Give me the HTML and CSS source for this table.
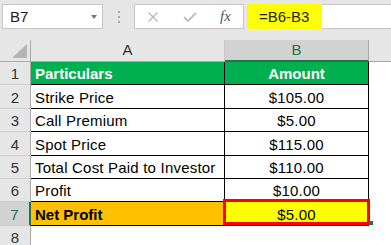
FILE: index.html
```html
<!DOCTYPE html>
<html>
<head>
<meta charset="utf-8">
<link rel="stylesheet" href="styles.css">
</head>
<body>
<div class="app">
  <div class="toolbar">
    <div class="namebox"><span class="nb-text">B7</span><span class="caret"></span></div>
    <div class="sep"><i></i><i></i><i></i></div>
    <div class="fxbox">
      <svg class="ico-x" width="10" height="10" viewBox="0 0 10 10"><path d="M0.5 0.5L9.5 9.5M9.5 0.5L0.5 9.5" stroke="#b8b8b8" stroke-width="1.4" fill="none"/></svg>
      <svg class="ico-check" width="14" height="10" viewBox="0 0 14 10"><path d="M1 5L5 9L13 1" stroke="#c2c2c2" stroke-width="2" fill="none"/></svg>
      <span class="fx">fx</span>
    </div>
    <div class="formula"><span class="hl">=B6-B3</span><span class="rest"></span></div>
  </div>
  <div class="sheet">
    <div class="corner"><svg width="15" height="14" viewBox="0 0 15 14"><polygon points="15,0 15,14 0,14" fill="#b4b4b4"/></svg></div>
    <div class="colhead">A</div>
    <div class="colhead sel">B</div>
    <div class="colhead blank"></div>

    <div class="rh">1</div>
    <div class="c head">Particulars</div>
    <div class="c head num">Amount</div>
    <div class="e"></div>

    <div class="rh">2</div>
    <div class="c">Strike Price</div>
    <div class="c num">$105.00</div>
    <div class="e"></div>

    <div class="rh">3</div>
    <div class="c">Call Premium</div>
    <div class="c num">$5.00</div>
    <div class="e"></div>

    <div class="rh">4</div>
    <div class="c">Spot Price</div>
    <div class="c num">$115.00</div>
    <div class="e"></div>

    <div class="rh">5</div>
    <div class="c">Total Cost Paid to Investor</div>
    <div class="c num">$110.00</div>
    <div class="e"></div>

    <div class="rh">6</div>
    <div class="c">Profit</div>
    <div class="c num">$10.00</div>
    <div class="e"></div>

    <div class="rh sel">7</div>
    <div class="c net">Net Profit</div>
    <div class="c num b7">$5.00<span class="sel-box"></span><span class="handle"></span></div>
    <div class="e"></div>

    <div class="rh">8</div>
    <div class="e"></div>
    <div class="e"></div>
    <div class="e"></div>
  </div>
</div>
</body>
</html>
```
FILE: styles.css
```css
* { box-sizing: border-box; }
body { margin: 0; }
.app {
  width: 391px;
  height: 245px;
  overflow: hidden;
  background: #e6e6e6;
  font-family: "Liberation Sans", Arial, sans-serif;
  font-size: 15px;
  color: #000;
}
.toolbar {
  display: flex;
  height: 29px;
  padding-top: 4px;
}
.namebox {
  width: 101px;
  margin-left: 2px;
  background: #fff;
  border: 1px solid #c6c6c6;
  display: flex;
  align-items: center;
  justify-content: space-between;
  padding: 0 5px 0 7px;
  line-height: 17px;
  color: #222;
}
.caret {
  width: 0;
  height: 0;
  border-left: 3px solid transparent;
  border-right: 3px solid transparent;
  border-top: 4px solid #777;
}
.sep {
  width: 31px;
  display: flex;
  flex-direction: column;
  align-items: center;
  justify-content: center;
  gap: 3px;
}
.sep i {
  display: block;
  width: 2px;
  height: 2px;
  background: #a6a6a6;
}
.fxbox {
  width: 110px;
  background: #fff;
  border: 1px solid #c6c6c6;
  display: flex;
  align-items: center;
  padding-left: 13px;
}
.ico-check { margin-left: 25px; }
.fx {
  margin-left: 23px;
  font-family: "Liberation Serif", serif;
  font-style: italic;
  font-size: 15px;
  color: #555;
  line-height: 17px;
}
.formula {
  flex: 1;
  margin-left: 3px;
  display: flex;
}
.hl {
  width: 75px;
  background: #ffff00;
  padding-left: 12px;
  display: flex;
  align-items: center;
  line-height: 17px;
  color: #222;
}
.rest {
  flex: 1;
  background: #fff;
  border-top: 1px solid #c6c6c6;
  border-bottom: 1px solid #c6c6c6;
}
.sheet {
  margin-top: 11px;
  display: grid;
  grid-template-columns: 31px 194px 144px 1fr;
  grid-template-rows: 22px 23px 24px 23px 24px 23px 23px 24px 23px;
  background: #fff;
}
.corner {
  background: #e6e6e6;
  border-right: 1px solid #a9a9a9;
  border-bottom: 1px solid #a9a9a9;
  display: flex;
  justify-content: flex-end;
  align-items: flex-end;
  padding: 0 3px 3px 0;
}
.colhead {
  background: #e6e6e6;
  border-bottom: 1px solid #a9a9a9;
  border-right: 1px solid #c8c8c8;
  display: flex;
  justify-content: center;
  align-items: flex-end;
  padding-bottom: 3px;
  line-height: 17px;
  color: #333;
}
.colhead.sel {
  background: #d2d2d2;
  color: #217346;
  border-bottom: 2px solid #217346;
  border-right: 1px solid #a9a9a9;
  padding-bottom: 2px;
}
.colhead.blank { border-right: none; }
.rh {
  background: #e6e6e6;
  border-right: 1px solid #a9a9a9;
  border-bottom: 1px solid #cfcfcf;
  display: flex;
  justify-content: center;
  align-items: flex-end;
  padding-bottom: 2px;
  line-height: 17px;
  color: #333;
}
.rh.sel {
  background: #d2d2d2;
  color: #217346;
  border-right: 2px solid #217346;
}
.c {
  border-right: 1px solid #000;
  border-bottom: 1px solid #000;
  display: flex;
  align-items: flex-end;
  padding: 0 4px 2px;
  line-height: 17px;
  white-space: nowrap;
  letter-spacing: 0.2px;
}
.c.num { justify-content: center; }
.c.head {
  background: #00b050;
  color: #fff;
  font-weight: bold;
  letter-spacing: 0;
}
.c.net {
  background: #ffc000;
  font-weight: bold;
  letter-spacing: 0;
}
.c.b7 {
  background: #ffff00;
  position: relative;
}
.sel-box {
  position: absolute;
  top: -3px;
  left: -2px;
  right: -2px;
  bottom: 0;
  border: 3px solid #ff0000;
}
.handle {
  position: absolute;
  right: -5px;
  bottom: 0;
  width: 4px;
  height: 4px;
  background: #217346;
}
.e { background: #fff; }
```
